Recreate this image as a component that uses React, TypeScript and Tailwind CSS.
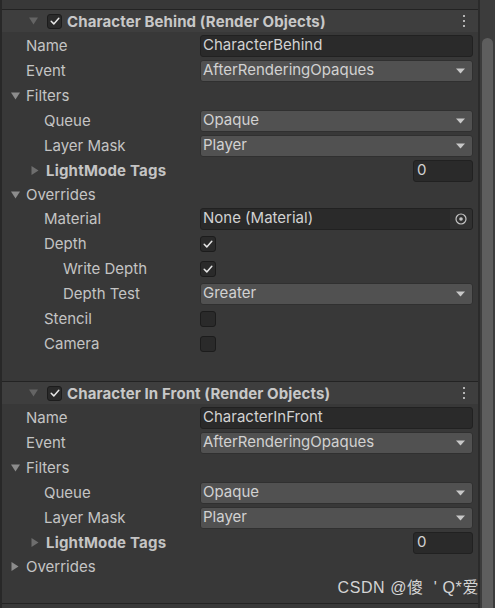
import type { ReactNode } from 'react';

const labelText = 'text-[15px] leading-none text-[#c4c4c4] whitespace-nowrap';

function TriDown({ className = '' }: { className?: string }) {
  return (
    <svg className={className} width="9" height="8" viewBox="0 0 9 8">
      <polygon points="0,0.5 9,0.5 4.5,7.5" fill="currentColor" />
    </svg>
  );
}

function TriRight({ className = '' }: { className?: string }) {
  return (
    <svg className={className} width="8" height="9" viewBox="0 0 8 9">
      <polygon points="0.5,0 7.5,4.5 0.5,9" fill="currentColor" />
    </svg>
  );
}

function Check() {
  return (
    <svg width="12" height="12" viewBox="0 0 12 12" fill="none">
      <path d="M2.2 6.3 L4.8 8.9 L9.8 3.2" stroke="#e6e6e6" strokeWidth="1.5" strokeLinecap="round" strokeLinejoin="round" />
    </svg>
  );
}

function Checkbox({ checked, size = 'w-[16px] h-[16px]' }: { checked?: boolean; size?: string }) {
  return (
    <div className={`${size} rounded-[3px] bg-[#2a2a2a] border border-[#1c1c1c] flex items-center justify-center`}>
      {checked && <Check />}
    </div>
  );
}

function TextField({ value }: { value: string }) {
  return (
    <div className="flex-1 h-[22px] rounded-[3px] bg-[#2a2a2a] border border-[#212121] flex items-center pl-[2px] text-[15px] text-[#d2d2d2]">
      {value}
    </div>
  );
}

function Dropdown({ value }: { value: string }) {
  return (
    <div className="flex-1 h-[22px] rounded-[3px] bg-[#515151] border border-[#303030] flex items-center justify-between pl-[2px] pr-[7px] text-[15px] text-[#d2d2d2]">
      <span>{value}</span>
      <svg width="9" height="6" viewBox="0 0 9 6">
        <polygon points="0,0.5 9,0.5 4.5,5.5" fill="#c8c8c8" />
      </svg>
    </div>
  );
}

function ObjectField({ value }: { value: string }) {
  return (
    <div className="flex-1 h-[22px] rounded-[3px] bg-[#2a2a2a] border border-[#212121] flex items-center text-[15px] text-[#d2d2d2] overflow-hidden">
      <span className="flex-1 pl-[2px]">{value}</span>
      <div className="w-[22px] h-full bg-[#303030] flex items-center justify-center">
        <svg width="12" height="12" viewBox="0 0 12 12" fill="none">
          <circle cx="6" cy="6" r="5" stroke="#c4c4c4" strokeWidth="1.2" />
          <circle cx="6" cy="6" r="1.8" fill="#c4c4c4" />
        </svg>
      </div>
    </div>
  );
}

function Row({ pad, label, children, h = 'h-[25px]' }: { pad: string; label: string; children?: ReactNode; h?: string }) {
  return (
    <div className={`flex items-center ${h} pr-[5px]`}>
      <div className={`w-[198px] ${pad} ${labelText}`}>{label}</div>
      <div className="flex-1 flex items-center">{children}</div>
    </div>
  );
}

function Foldout({ open, label, h = 'h-[25px]' }: { open: boolean; label: string; h?: string }) {
  return (
    <div className={`flex items-center ${h} pl-[9px]`}>
      <div className="w-[15px] flex items-center text-[#8c8c8c]">{open ? <TriDown /> : <TriRight />}</div>
      <span className={labelText}>{label}</span>
    </div>
  );
}

function LightModeTags() {
  return (
    <div className="flex items-center h-[25px] pl-[29px] pr-[5px]">
      <div className="w-[15px] flex items-center text-[#6e6e6e]">
        <TriRight />
      </div>
      <span className="text-[15px] leading-none font-bold tracking-[0.2px] text-[#c4c4c4]">LightMode Tags</span>
      <div className="ml-auto w-[60px] h-[22px] rounded-[3px] bg-[#2a2a2a] border border-[#212121] flex items-center pl-[3px] text-[15px] text-[#d2d2d2]">
        0
      </div>
    </div>
  );
}

function Header({ title }: { title: string }) {
  return (
    <div className="border-t border-[#232323] h-[23px] bg-[#3e3e3e] flex items-center pl-[27px] pr-[13px]">
      <div className="text-[#646464] flex items-center">
        <TriDown />
      </div>
      <div className="ml-[9px]">
        <Checkbox checked size="w-[15px] h-[15px]" />
      </div>
      <span className="ml-[5px] text-[15px] leading-none font-bold tracking-[0.1px] text-[#c8c8c8] whitespace-nowrap">{title}</span>
      <div className="ml-auto flex flex-col gap-[3px]">
        <div className="w-[2px] h-[2px] bg-[#b4b4b4]" />
        <div className="w-[2px] h-[2px] bg-[#b4b4b4]" />
        <div className="w-[2px] h-[2px] bg-[#b4b4b4]" />
      </div>
    </div>
  );
}

function CommonTop({ name }: { name: string }) {
  return (
    <>
      <Row pad="pl-[24px]" label="Name">
        <TextField value={name} />
      </Row>
      <Row pad="pl-[24px]" label="Event">
        <Dropdown value="AfterRenderingOpaques" />
      </Row>
      <Foldout open label="Filters" />
      <Row pad="pl-[42px]" label="Queue">
        <Dropdown value="Opaque" />
      </Row>
      <Row pad="pl-[42px]" label="Layer Mask">
        <Dropdown value="Player" />
      </Row>
      <LightModeTags />
    </>
  );
}

export default function App() {
  return (
    <div className="w-[495px] h-[608px] bg-[#383838] flex overflow-hidden relative" style={{ fontFamily: 'Inter, "Noto Sans", sans-serif' }}>
      <div className="w-[2px] bg-[#282828]" />
      <div className="flex-1 flex flex-col">
        <div className="h-[9px]" />
        <Header title="Character Behind (Render Objects)" />
        <div className="h-[1px]" />
        <CommonTop name="CharacterBehind" />
        <Foldout open label="Overrides" h="h-[23px]" />
        <Row pad="pl-[42px]" label="Material">
          <ObjectField value="None (Material)" />
        </Row>
        <Row pad="pl-[42px]" label="Depth">
          <Checkbox checked />
        </Row>
        <Row pad="pl-[61px]" label="Write Depth">
          <Checkbox checked />
        </Row>
        <Row pad="pl-[61px]" label="Depth Test">
          <Dropdown value="Greater" />
        </Row>
        <Row pad="pl-[42px]" label="Stencil">
          <Checkbox />
        </Row>
        <Row pad="pl-[42px]" label="Camera">
          <Checkbox />
        </Row>
        <div className="h-[25px]" />
        <Header title="Character In Front (Render Objects)" />
        <div className="h-[1px]" />
        <CommonTop name="CharacterInFront" />
        <Foldout open={false} label="Overrides" h="h-[23px]" />
        <div className="h-[25px]" />
        <div className="border-t border-[#232323]" />
      </div>
      <div className="w-[2px] bg-[#2b2b2b]" />
      <div className="w-[15px] bg-[#3c3c3c] pt-[38px] px-[2px] flex flex-col">
        <div className="flex-1 rounded-t-full bg-[#5e5e5e]" />
      </div>
      <div
        className="absolute right-[16px] bottom-[8px] text-[16px] tracking-[0.6px] text-[#d4d4d4] whitespace-pre"
        style={{ fontFamily: '"Liberation Sans", "Noto Sans CJK SC", sans-serif' }}
      >
        {"CSDN @傻  ' Q*爱"}
      </div>
    </div>
  );
}
